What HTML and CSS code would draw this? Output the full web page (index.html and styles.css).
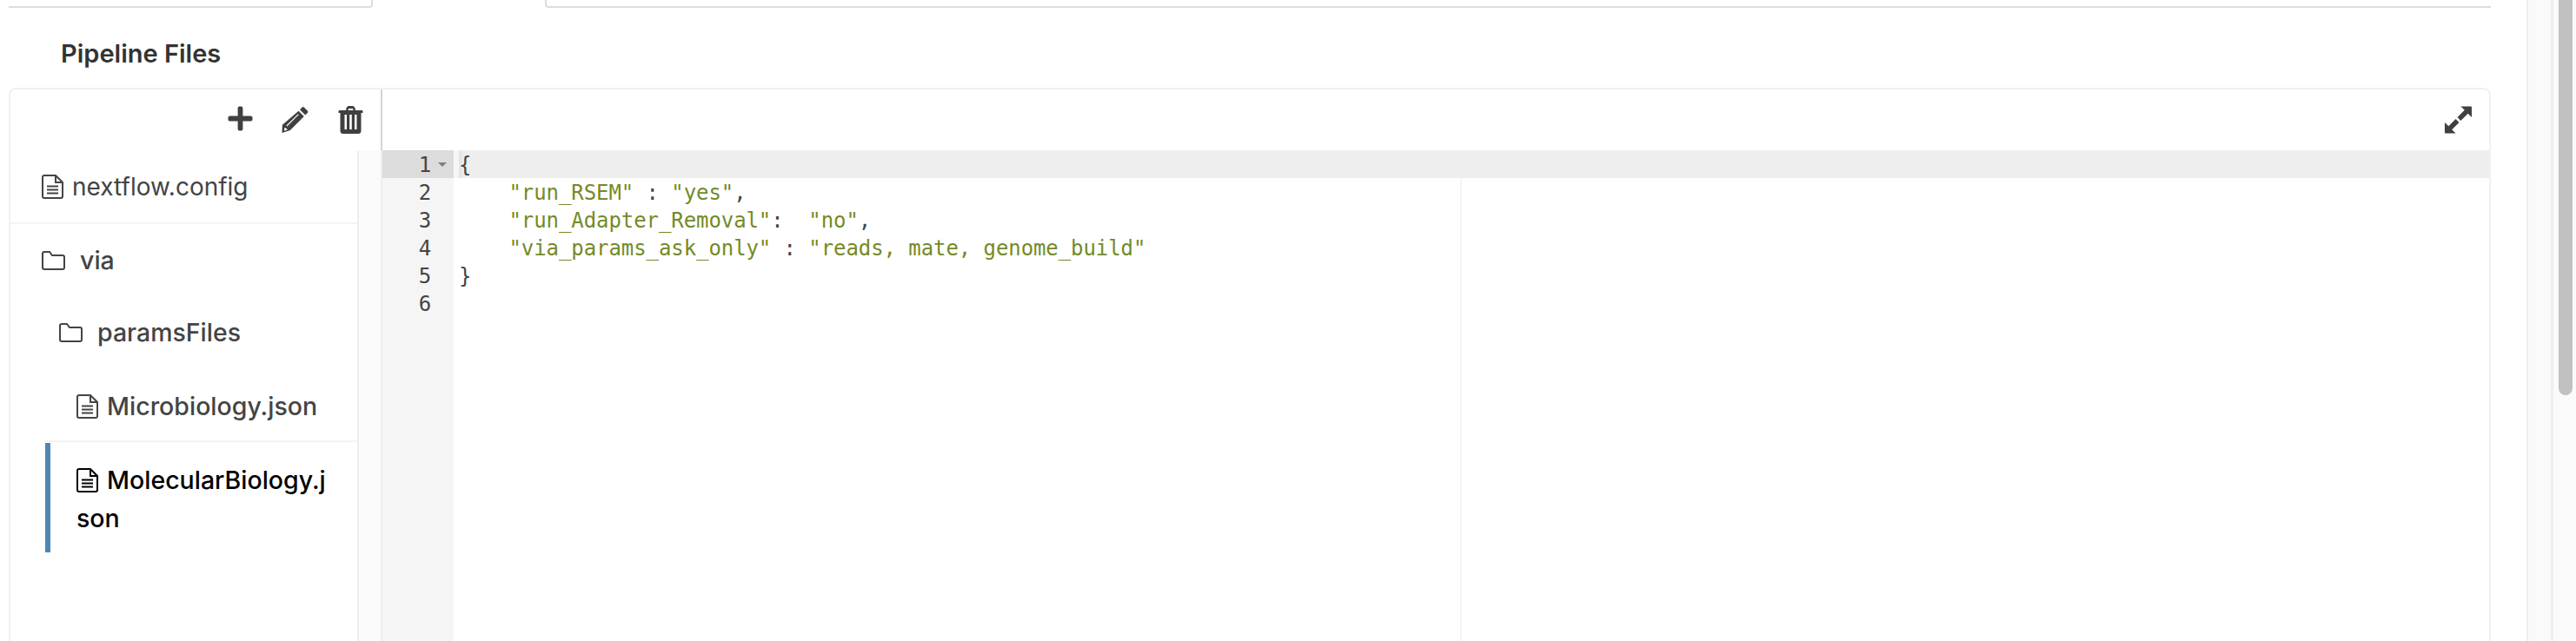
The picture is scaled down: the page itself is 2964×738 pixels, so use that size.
FILE: index.html
```html
<!DOCTYPE html>
<html lang="en">
<head>
<meta charset="utf-8">
<title>Pipeline Files</title>
<link rel="stylesheet" href="styles.css">
</head>
<body>
<div class="page">
  <main class="content">
    <div class="tabs">
      <div class="tab tab-left"></div>
      <div class="tab tab-active"></div>
      <div class="tab tab-right"></div>
    </div>
    <h3 class="title">Pipeline Files</h3>
    <section class="card">
      <aside class="side">
        <div class="tools">
          <svg class="tool tool-plus" viewBox="0 0 30 30"><path d="M12 2.500a2 2 0 0 1 2-2h2a2 2 0 0 1 2 2V12h9.500a2 2 0 0 1 2 2v2a2 2 0 0 1-2 2H18v9.500a2 2 0 0 1-2 2h-2a2 2 0 0 1-2-2V18H2.500a2 2 0 0 1-2-2v-2a2 2 0 0 1 2-2H12z"/></svg>
          <svg class="tool tool-pencil" viewBox="0 0 32 32"><path fill-rule="evenodd" d="M24.500.8a2 2 0 0 1 2.800 0l3.900 3.900a2 2 0 0 1 0 2.800l-2.600 2.600-6.700-6.700zM20.300 5l6.700 6.700L10 28.700 0 32l.4-9.900zM19.600 8.700 5.300 23l.9.900L20.500 9.600zM3 25.500l-.3 3.800 3.800-.8-1-2z"/></svg>
          <svg class="tool tool-trash" viewBox="0 0 28 32"><path fill-rule="evenodd" d="M9 2.500C9.400 1 10.500 0 12 0h4c1.500 0 2.600 1 3 2.500L19.500 5H27a1 1 0 0 1 1 1v1.500a.5.500 0 0 1-.5.500H26v20.500a3.500 3.500 0 0 1-3.500 3.500h-17A3.500 3.500 0 0 1 2 28.500V8H.5a.5.500 0 0 1-.5-.5V6a1 1 0 0 1 1-1h7.500zM11 5h6l-.5-2h-5zM7 10v17h2.500V10zM12.700 10v17h2.600V10zM18.500 10v17H21V10z"/></svg>
        </div>
        <div class="tree-wrap">
          <ul class="tree">
            <li class="node node-first node-rule">
              <svg class="ico ico-file" viewBox="0 0 25 28"><path d="M1 3a2 2 0 0 1 2-2h13l8 8v16a2 2 0 0 1-2 2H3a2 2 0 0 1-2-2zM16 1.500V9h8M6 13.500h13M6 17.500h13M6 21.500h13"/></svg><span class="name">nextflow.config</span>
            </li>
            <li class="node node-folder">
              <svg class="ico ico-folder" viewBox="0 0 27 22"><path d="M1 3a2 2 0 0 1 2-2h6l3 4h12a2 2 0 0 1 2 2v12a2 2 0 0 1-2 2H3a2 2 0 0 1-2-2z"/></svg><span class="name">via</span>
            </li>
            <li class="node node-folder node-sub">
              <svg class="ico ico-folder" viewBox="0 0 27 22"><path d="M1 3a2 2 0 0 1 2-2h6l3 4h12a2 2 0 0 1 2 2v12a2 2 0 0 1-2 2H3a2 2 0 0 1-2-2z"/></svg><span class="name">paramsFiles</span>
            </li>
            <li class="node node-leaf node-rule">
              <svg class="ico ico-file" viewBox="0 0 25 28"><path d="M1 3a2 2 0 0 1 2-2h13l8 8v16a2 2 0 0 1-2 2H3a2 2 0 0 1-2-2zM16 1.500V9h8M6 13.500h13M6 17.500h13M6 21.500h13"/></svg><span class="name">Microbiology.json</span>
            </li>
            <li class="node node-active">
              <svg class="ico ico-file" viewBox="0 0 25 28"><path d="M1 3a2 2 0 0 1 2-2h13l8 8v16a2 2 0 0 1-2 2H3a2 2 0 0 1-2-2zM16 1.500V9h8M6 13.500h13M6 17.500h13M6 21.500h13"/></svg><span class="name">MolecularBiology.json</span>
            </li>
          </ul>
          <div class="side-track"></div>
        </div>
      </aside>
      <div class="editor-pane">
        <div class="editor-bar">
          <svg class="expand" viewBox="0 0 32 32"><path d="M19 0H31a1 1 0 0 1 1 1V13L27.500 8.500 19 17 15 13 23.500 4.500zM13 32H1a1 1 0 0 1-1-1V19L4.500 23.500 13 15 17 19 8.500 27.500z"/></svg>
        </div>
        <div class="editor">
          <div class="gutter">
            <div class="gline gline-active">1<span class="fold"></span></div>
            <div class="gline">2</div>
            <div class="gline">3</div>
            <div class="gline">4</div>
            <div class="gline">5</div>
            <div class="gline">6</div>
          </div>
          <div class="code">
            <div class="print-margin"></div>
            <div class="cline cline-active">{</div>
            <div class="cline">    <span class="str">"run_RSEM"</span> : <span class="str">"yes"</span>,</div>
            <div class="cline">    <span class="str">"run_Adapter_Removal"</span>:  <span class="str">"no"</span>,</div>
            <div class="cline">    <span class="str">"via_params_ask_only"</span> : <span class="str">"reads, mate, genome_build"</span></div>
            <div class="cline">}</div>
            <div class="cline"></div>
          </div>
        </div>
      </div>
    </section>
  </main>
  <div class="scroll-inner"></div>
  <div class="scroll-outer"><div class="thumb"></div></div>
</div>
</body>
</html>
```
FILE: styles.css
```css
* { box-sizing: border-box; }
html, body { margin: 0; height: 738px; overflow: hidden; background: #fff; }
body { font-family: Inter, "Liberation Sans", sans-serif; color: #404040; }
.page { display: flex; height: 738px; width: 2964px; }
.content { width: 2907px; padding: 0 41px 0 10px; flex: none; overflow: hidden; }
.tabs { display: flex; height: 9px; }
.tab-left { width: 419px; border: 2px solid #ddd; border-width: 0 2px 2px 0; border-bottom-right-radius: 4px; }
.tab-active { width: 198px; }
.tab-right { flex: 1; border: 2px solid #ddd; border-width: 0 0 2px 2px; border-bottom-left-radius: 4px; }
.title { margin: 36px 0 0 60px; font-size: 29px; line-height: 34px; font-weight: 600; color: #333; }
.card { display: flex; margin-top: 22px; height: 700px; border: 2px solid #eef1f5; border-bottom: 0; border-radius: 8px 8px 0 0; }
.side { width: 426px; flex: none; display: flex; flex-direction: column; }
.tools { height: 70px; display: flex; justify-content: flex-end; align-items: flex-start; padding: 19px 20px 0 0; }
.tool { fill: #404040; display: block; flex: none; }
.tool-plus { width: 29px; height: 29px; }
.tool-pencil { width: 31px; height: 30px; margin: 1px 0 0 33px; }
.tool-trash { width: 29px; height: 32px; margin-left: 34px; }
.tree-wrap { flex: 1; display: flex; }
.tree { list-style: none; margin: 0; padding: 0; width: 399px; flex: none; }
.side-track { flex: 1; background: #fafafa; border-left: 2px solid #eee; }
.node { font-size: 28px; line-height: 44px; height: 83px; padding: 20px 20px 0 36px; color: #444; }
.node-first { height: 85px; }
.node-folder { font-size: 28.5px; font-weight: 500; }
.node-sub { padding-left: 56px; }
.node-leaf { height: 85px; margin-left: 40px; padding: 22px 20px 0 36px; font-size: 28.5px; font-weight: 500; }
.node-rule { border-bottom: 2px solid #f3f3f3; }
.node-active { height: 126px; margin: 1px 0 0 40px; padding: 21px 26px 0 30px; border-left: 6px solid #4f86b7; color: #000; font-size: 28.5px; font-weight: 500; word-break: break-all; }
.ico { fill: none; stroke: currentColor; stroke-width: 2px; }
.ico-file { width: 25px; height: 28px; vertical-align: -4px; margin-right: 10px; }
.ico-folder { width: 27px; height: 22px; vertical-align: -1px; margin-right: 17px; }
.editor-pane { flex: 1; display: flex; flex-direction: column; min-width: 0; border-left: 2px solid #eee; }
.editor-bar { height: 70px; margin-left: -2px; border-left: 2px solid #d4d4d4; display: flex; justify-content: flex-end; padding: 19px 20px 0 0; flex: none; }
.expand { width: 31px; height: 32px; fill: #404040; }
.editor { flex: 1; display: flex; font: 24px/34px "DejaVu Sans Mono", monospace; letter-spacing: -0.08px; }
.gutter { width: 82px; flex: none; background: #f5f5f5; color: #444; text-align: right; }
.gline { height: 32px; padding-right: 26px; position: relative; }
.gline-active { background: #dcdcdc; }
.fold { position: absolute; left: 64px; top: 14px; border: 5px solid transparent; border-top: 5px solid #808080; border-bottom: 0; }
.code { flex: 1; position: relative; color: #444; }
.print-margin { position: absolute; left: 1158px; top: 0; bottom: 0; width: 2px; background: #f4f4f4; }
.cline { height: 32px; padding-left: 6px; position: relative; white-space: pre; }
.cline-active { background: linear-gradient(to right, #f6f6f6 6px, #e6e6e6 6px 10px, #eeeeef 10px); }
.str { color: #748a28; }
.scroll-inner { width: 31px; flex: none; background: #fafafa; border-left: 2px solid #eee; border-right: 3px solid #eee; }
.scroll-outer { flex: 1; padding: 0 4px 0 6px; background: #fafafa; }
.thumb { height: 455px; background: #c1c1c1; border-radius: 0 0 8px 8px; }
```
